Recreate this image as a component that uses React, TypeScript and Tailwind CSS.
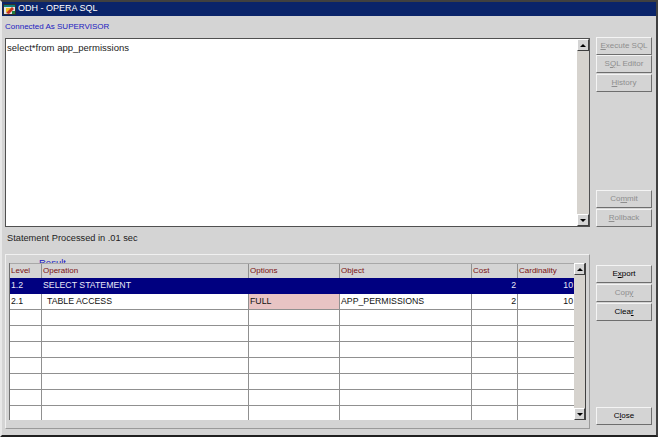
const rows = [
  ['1.2', 'SELECT STATEMENT', '', '', '2', '10'],
  ['2.1', ' TABLE ACCESS', 'FULL', 'APP_PERMISSIONS', '2', '10'],
  ['', '', '', '', '', ''],
  ['', '', '', '', '', ''],
  ['', '', '', '', '', ''],
  ['', '', '', '', '', ''],
  ['', '', '', '', '', ''],
  ['', '', '', '', '', ''],
  ['', '', '', '', '', ''],
];

const widths = ['w-[31px]', 'w-[207px]', 'w-[91px]', 'w-[132px]', 'w-[46px]', 'w-[57px]'];
const headers = ['Level', 'Operation', 'Options', 'Object', 'Cost', 'Cardinality'];

function Btn({ label, u, off, className = '' }: { label: string; u: number; off?: boolean; className?: string }) {
  return (
    <button
      className={`w-[56px] h-[18px] shrink-0 flex items-center justify-center whitespace-nowrap bg-[#d4d4d4] border border-t-[#f4f4f4] border-l-[#f4f4f4] border-r-[#6e6e6e] border-b-[#6e6e6e] text-[8px] ${off ? 'text-[#8e8e8e]' : 'text-black'} ${className}`}
    >
      <span>
        {label.slice(0, u)}
        <span className="underline">{label[u]}</span>
        {label.slice(u + 1)}
      </span>
    </button>
  );
}

function Scrollbar({ className = '' }: { className?: string }) {
  return (
    <div className={`w-[12px] flex flex-col bg-[#d6d3ce] ${className}`}>
      <div className="h-[12px] flex items-center justify-center bg-[#d4d4d4] border border-t-white border-l-white border-r-[#404040] border-b-[#404040]">
        <div className="w-0 h-0 border-x-[3px] border-x-transparent border-b-[3px] border-b-black" />
      </div>
      <div className="flex-1" />
      <div className="h-[12px] flex items-center justify-center bg-[#d4d4d4] border border-t-white border-l-white border-r-[#404040] border-b-[#404040]">
        <div className="w-0 h-0 border-x-[3px] border-x-transparent border-t-[3px] border-t-black" />
      </div>
    </div>
  );
}

export default function App() {
  return (
    <div className="w-[658px] h-[437px] flex flex-col bg-[#d4d4d4] border-2 border-t-[#404040] border-l-[#e8e8e8] border-r-[#404040] border-b-[#202020] overflow-hidden font-['Liberation_Sans',Arial,sans-serif]">
      <div className="h-[14px] flex items-center gap-[2px] bg-[#0a246a] text-white text-[9px] pl-[1px] shrink-0">
        <svg width="13" height="13" viewBox="0 0 13 13">
          <rect x="0.5" y="1.5" width="12" height="10" fill="#e4e4e4" stroke="#303030" strokeWidth="1" />
          <rect x="1" y="2" width="11" height="2" fill="#108080" />
          <rect x="3" y="5" width="5" height="4" fill="#f0c020" />
          <path d="M3 10 L9 4 L11 6 L6 11 Z" fill="#c83020" />
          <rect x="9" y="8" width="3" height="3" fill="#208040" />
        </svg>
        <span>ODH - OPERA SQL</span>
      </div>

      <div className="flex-1 flex flex-col px-[3px]">
        <div className="h-[22px] shrink-0 flex items-center text-[8px] text-[#2020c0]">Connected As SUPERVISOR</div>

        <div className="flex gap-[6px]">
          <div className="w-[585px] h-[189px] flex border border-[#505050] bg-white">
            <div className="flex-1 px-[1px] pt-[3px] text-[9.5px] leading-[11px] text-[#222]">select*from app_permissions</div>
            <Scrollbar />
          </div>
          <div className="flex flex-col h-[190px] -mt-[1px]">
            <Btn label="Execute SQL" u={0} off />
            <Btn label="SQL Editor" u={1} off />
            <Btn label="History" u={0} off className="mt-[1px]" />
            <Btn label="Commit" u={2} off className="mt-auto" />
            <Btn label="Rollback" u={0} off className="mt-[1px]" />
          </div>
        </div>

        <div className="h-[27px] shrink-0 flex items-center px-[2px] pb-[3px] text-[9.25px] text-[#222]">Statement Processed in .01 sec</div>

        <div className="flex gap-[6px]">
          <div className="relative w-[585px] h-[175px] border border-t-[#f0f0f0] border-l-[#f0f0f0] border-r-[#9a9a9a] border-b-[#9a9a9a] pl-[3px] pt-[8px] pr-[3px]">
            <span className="absolute left-[33px] top-[2px] h-[6px] overflow-hidden text-[9.5px] leading-[11px] text-[#2020c0]">Result</span>
            <div className="flex h-[157px] border-l border-[#707070]">
              <div className="w-[564px] flex flex-col overflow-hidden">
                <div className="flex h-[15px] shrink-0 bg-[#d4d4d4] border-t border-[#a8a8a8]">
                  {headers.map((h, i) => (
                    <div key={h} className={`${widths[i]} shrink-0 flex items-center px-[1px] text-[8px] text-[#7a1010] ${i ? 'border-l border-[#909090]' : ''}`}>
                      {h}
                    </div>
                  ))}
                </div>
                {rows.map((r, ri) => (
                  <div key={ri} className={`flex h-[16px] shrink-0 ${ri === 0 ? 'bg-[#000080] text-[#e8e8f8]' : 'bg-white text-[#111] border-b border-[#909090]'}`}>
                    {r.map((c, i) => (
                      <div
                        key={i}
                        className={`${widths[i]} shrink-0 flex items-center px-[1px] text-[8.75px] ${i ? 'border-l' : ''} ${ri === 0 ? 'border-[#000080]' : 'border-[#909090]'} ${i > 3 ? 'justify-end' : ''} ${ri === 1 && i === 2 ? 'bg-[#e8c4c4]' : ''} ${ri === 1 && i === 1 ? 'pl-[5px]' : ''}`}
                      >
                        {c.trim()}
                      </div>
                    ))}
                  </div>
                ))}
              </div>
              <Scrollbar className="border-r border-[#404040]" />
            </div>
          </div>
          <div className="flex flex-col h-[175px] pt-[11px] pb-[4px]">
            <Btn label="Export" u={1} />
            <Btn label="Copy" u={3} off className="mt-[1px]" />
            <Btn label="Clear" u={4} className="mt-[1px]" />
            <Btn label="Close" u={1} className="mt-auto" />
          </div>
        </div>
      </div>
    </div>
  );
}
